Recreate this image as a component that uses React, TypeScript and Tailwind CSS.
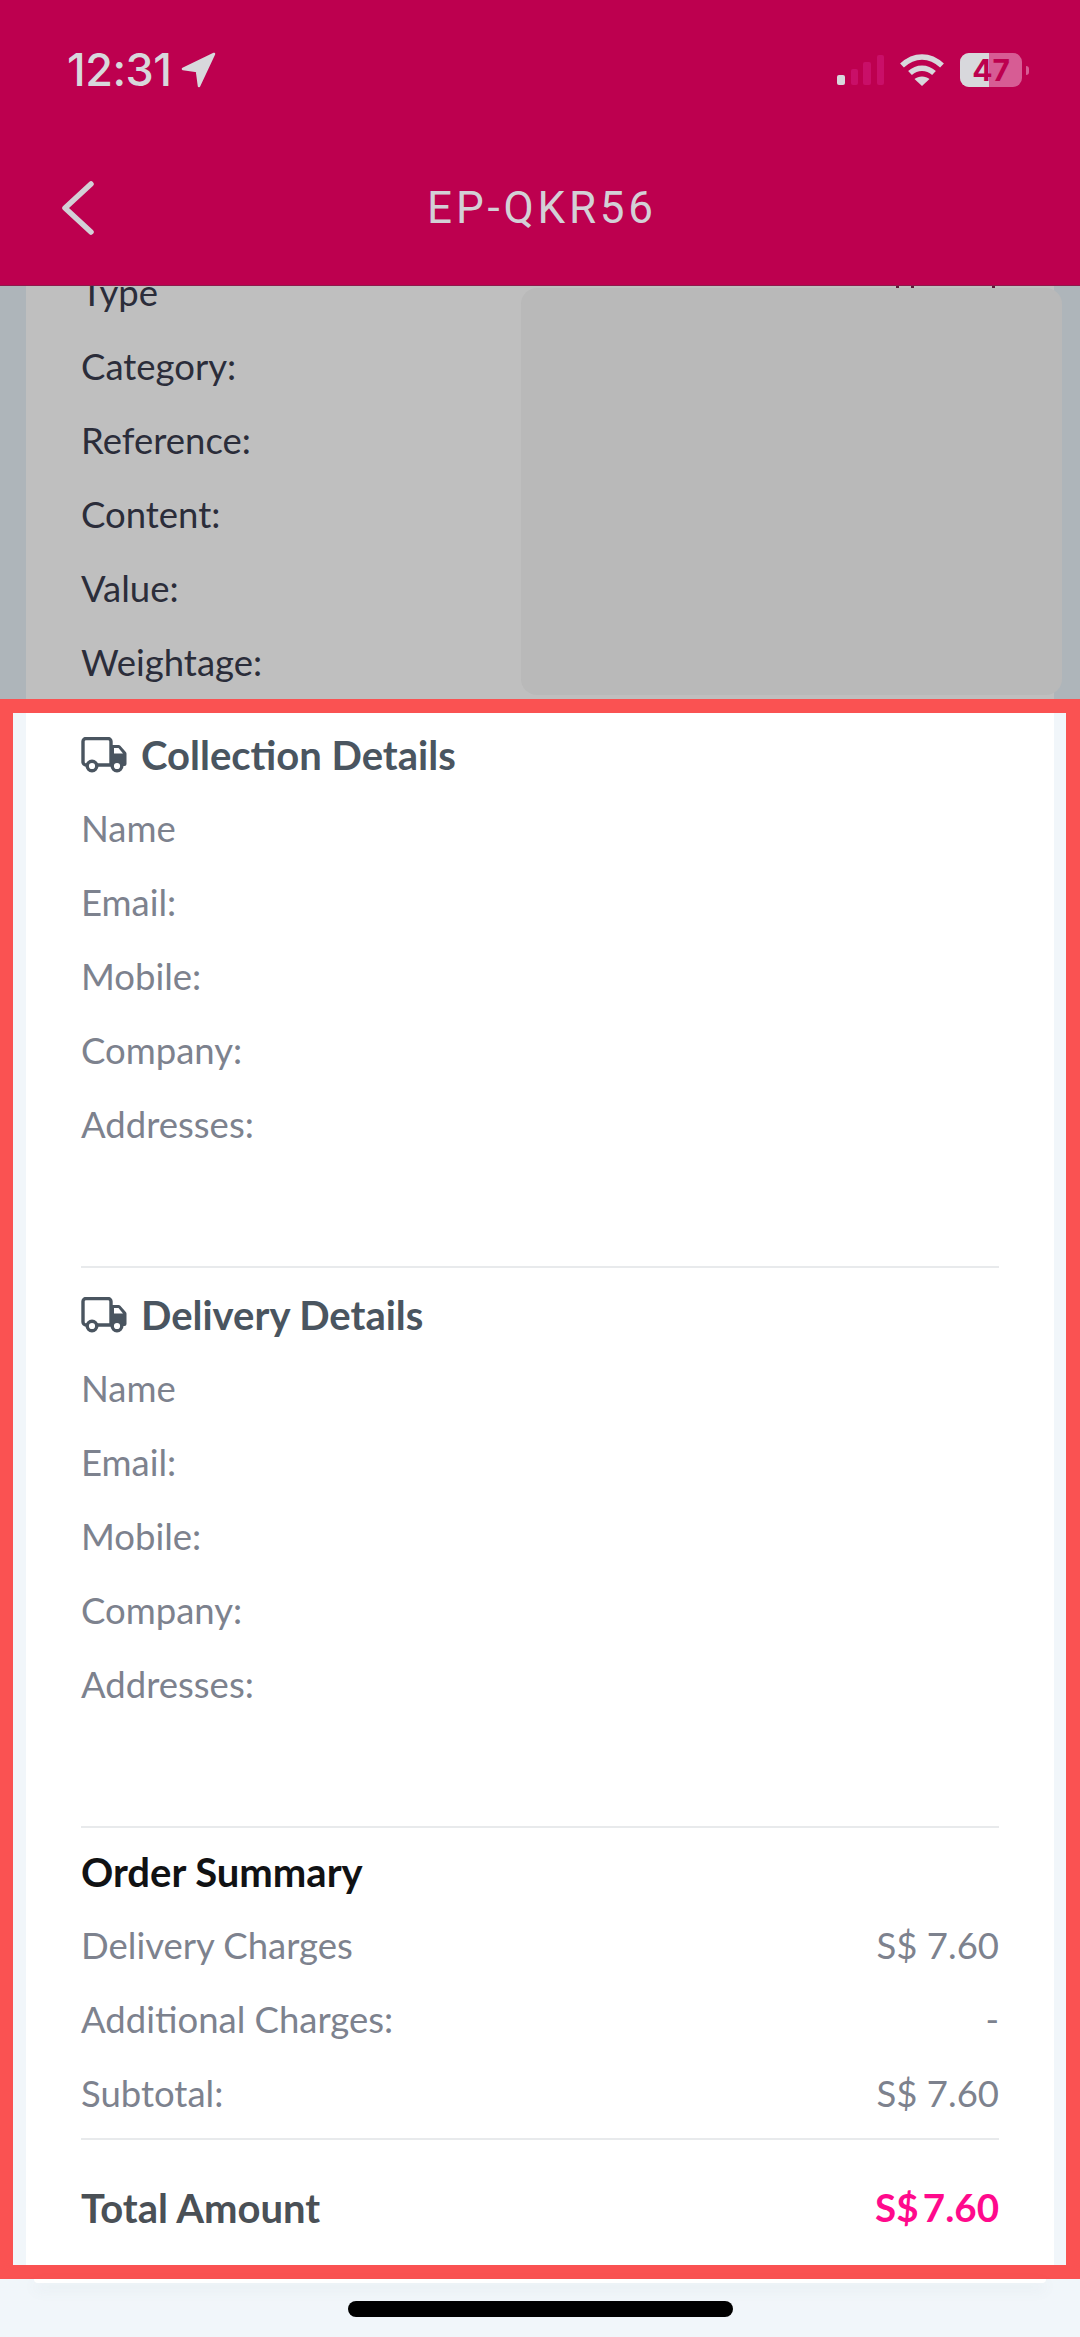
const lato = 'font-["Lato","Noto_Sans",sans-serif]'

function TruckIcon() {
  return (
    <svg width="46" height="36" viewBox="0 0 46 36" fill="none" className="shrink-0">
      <path d="M7 28H5a3 3 0 0 1-3-3V4.500a3 3 0 0 1 3-3h22a3 3 0 0 1 3 3V28H15" stroke="#4a5560" strokeWidth="3.400" />
      <path d="M30 8h7.500a2.500 2.500 0 0 1 1.800.8l5.500 6.200a2.500 2.500 0 0 1 .7 1.700V27a2 2 0 0 1-2 2h-1.500a6 6 0 0 0-11.500 0Z" fill="#4a5560" />
      <path d="M33 11h4.500l4.500 5.500H33Z" fill="#fff" />
      <circle cx="11" cy="29" r="4.800" fill="#fff" stroke="#4a5560" strokeWidth="3.400" />
      <circle cx="36" cy="29" r="4.800" fill="#fff" stroke="#4a5560" strokeWidth="3.400" />
    </svg>
  )
}

function Row({ label, value }: { label: string; value?: string }) {
  return (
    <div className="flex h-[74px] items-center justify-between text-[36.5px] text-[#7d828e]">
      <span>{label}</span>
      {value && <span>{value}</span>}
    </div>
  )
}

function AddressBlock({ title }: { title: string }) {
  return (
    <div>
      <div className="flex h-[73px] items-center gap-[14px] text-[40px] font-bold text-[#4a5560]">
        <TruckIcon />
        <span>{title}</span>
      </div>
      <Row label="Name" />
      <Row label="Email:" />
      <Row label="Mobile:" />
      <Row label="Company:" />
      <Row label="Addresses:" />
    </div>
  )
}

function StatusBar() {
  return (
    <div className="flex h-[140px] items-center justify-between pl-[67px] pr-[51px] text-[#d8d8dc]">
      <div className="flex items-center gap-[10px]">
        <span className="font-['Inter',sans-serif] text-[45px] font-medium tracking-[-0.5px]">12:31</span>
        <svg width="36" height="36" viewBox="0 0 36 36" fill="#d8d8dc">
          <path d="M33 2 2 17l14 2 2 15Z" stroke="#d8d8dc" strokeWidth="2.500" strokeLinejoin="round" />
        </svg>
      </div>
      <div className="flex items-center">
        <svg width="48" height="31" viewBox="0 0 48 31" className="mr-[15px] mt-[1px]">
          <rect x="0" y="20" width="8" height="10" rx="2" fill="#d8d8dc" />
          <rect x="14" y="14" width="7" height="16" rx="2" fill="#c90f68" />
          <rect x="26" y="7" width="8" height="23" rx="2" fill="#c90f68" />
          <rect x="40" y="0" width="7" height="30" rx="2" fill="#c90f68" />
        </svg>
        <svg width="44" height="32" viewBox="0 0 44 32" fill="none" stroke="#d8d8dc" strokeWidth="5.500" className="mr-[16px]">
          <path d="M2 11.500C14 0 30 0 42 11.500" />
          <path d="M10 19c7-6.500 17-6.500 24 0" />
          <path d="M22 32l-7.500-7c4-3.500 11-3.500 15 0Z" fill="#d8d8dc" stroke="none" />
        </svg>
        <div className="relative flex h-[34px] w-[62px] items-center justify-center overflow-hidden rounded-[9px] bg-[#d75c94]">
          <div className="absolute inset-y-0 left-0 w-[29px] bg-[#d8d8dc]" />
          <span className="relative font-['Inter',sans-serif] text-[30px] font-bold leading-none text-[#bd004f]">47</span>
        </div>
        <div className="ml-[4px] h-[9px] w-[3px] rounded-r-full bg-[#d75c94]" />
      </div>
    </div>
  )
}

export default function App() {
  return (
    <div className={`${lato} h-[2337px] w-[1080px] overflow-hidden bg-[#f1f6fa]`}>
      <header className="h-[286px] border-b border-[#8e1a4c] bg-[#bd004f]">
        <StatusBar />
        <div className="grid h-[136px] grid-cols-[1fr_auto_1fr] items-center pl-[61px]">
          <svg width="34" height="54" viewBox="0 0 34 54" fill="none" stroke="#d3d0d6" strokeWidth="5.500" strokeLinecap="round" strokeLinejoin="round">
            <path d="M30 3 4 27l26 24" />
          </svg>
          <h1 className="-ml-[57px] font-['Roboto',sans-serif] text-[44px] font-normal tracking-[3.8px] text-[#d3d0d6]">EP-QKR56</h1>
          <div />
        </div>
      </header>

      {/* dimmed part under the highlight */}
      <section className="relative h-[413px] overflow-hidden bg-[#aeb5ba] px-[26px]">
        <div className="flex h-full bg-[#bfbfbf]">
          <div className="-mt-[31px] flex-1 pl-[55px] text-[36.5px] text-[#2b2d3a]">
            {['Type', 'Category:', 'Reference:', 'Content:', 'Value:', 'Weightage:'].map((label) => (
              <div key={label} className="flex h-[74px] items-center">
                {label}
              </div>
            ))}
          </div>
          <div className="-mr-[8px] mt-[2px] h-[407px] w-[541px] rounded-[16px] bg-[#b9b9b9]" />
        </div>
        <span className="absolute left-[896px] top-0 h-[2px] w-[3px] bg-[#5a1a38]" />
        <span className="absolute left-[911px] top-0 h-[2px] w-[3px] bg-[#5a1a38]" />
        <span className="absolute left-[992px] top-0 h-[2px] w-[3px] bg-[#5a1a38]" />
      </section>

      {/* highlighted frame */}
      <section className="border-y-[14px] border-l-[13px] border-r-[14px] border-[#fa5252] bg-[#f1f6fa] pl-[13px] pr-[12px]">
        <div className="h-[1552px] bg-white pl-[55px] pr-[55px] pt-[5px]">
          <AddressBlock title="Collection Details" />
          <div className="mb-[10px] mt-[105px] h-[2px] bg-[#e8eaec]" />
          <AddressBlock title="Delivery Details" />
          <div className="mb-[7px] mt-[105px] h-[2px] bg-[#e8eaec]" />
          <div className="flex h-[73px] items-center text-[40px] font-bold text-[#111214]">Order Summary</div>
          <Row label="Delivery Charges" value="S$ 7.60" />
          <Row label="Additional Charges:" value="-" />
          <Row label="Subtotal:" value="S$ 7.60" />
          <div className="mb-[31px] mt-[8px] h-[2px] bg-[#e8eaec]" />
          <div className="flex h-[74px] items-center justify-between text-[40px] font-bold">
            <span className="text-[#4a5056]">Total Amount</span>
            <span className="text-[38.5px] [word-spacing:-5px] text-[#ff0a8c]">S$ 7.60</span>
          </div>
        </div>
      </section>

      <div className="mx-[34px] h-[4px] rounded-b-[14px] bg-white shadow-[0_6px_14px_rgba(100,120,140,0.12)]" />
      <div className="mx-auto mt-[18px] h-[16px] w-[385px] rounded-full bg-black" />
    </div>
  )
}
